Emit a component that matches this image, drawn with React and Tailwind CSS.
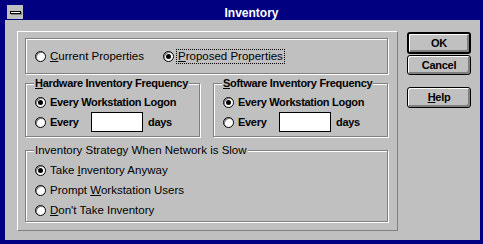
import React from 'react';

// Windows 3.1 style "Inventory" dialog

const boldText = 'text-[11px] font-bold tracking-[-0.3px] leading-[13px]';
const lightText = 'text-[11.5px] leading-[13px]';

const Radio = ({ checked, children, text = boldText }) => (
  <div className="flex items-center h-[20px]">
    <span className="w-[11px] h-[11px] rounded-full border border-black bg-white flex items-center justify-center shadow-[inset_1px_1px_0_#808080]">
      {checked && <span className="w-[5px] h-[5px] rounded-full bg-black" />}
    </span>
    <span className={`ml-[4px] ${text}`}>{children}</span>
  </div>
);

// Etched group box with its title lying on the top edge
const Group = ({ title, titleClass = boldText, className = '', children }) => (
  <div
    className={`relative border border-[#808080] shadow-[1px_1px_0_#fff,inset_1px_1px_0_#fff] ${className}`}
  >
    {title && (
      <span className={`absolute -top-[7px] left-[8px] px-[1px] bg-[#c0c0c0] ${titleClass}`}>
        {title}
      </span>
    )}
    {children}
  </div>
);

const Button = ({ children, isDefault, className = '' }) => (
  <button
    className={`w-[64px] flex items-center justify-center rounded-[3px] bg-[#c0c0c0] border-black ${
      isDefault ? 'border-2' : 'border'
    } shadow-[inset_1px_1px_0_#fff,inset_-2px_-2px_0_#808080] ${boldText} text-black ${className}`}
  >
    {children}
  </button>
);

const FrequencyGroup = ({ title }) => (
  <Group title={title} className="h-[54px] pl-[9px] pt-[8px]">
    <Radio checked>Every Workstation Logon</Radio>
    <div className="flex items-center h-[20px]">
      <Radio>
        <span className="inline-block w-[41px]">Every</span>
      </Radio>
      <div className="w-[52px] h-[20px] bg-white border border-black" />
      <span className={`ml-[5px] ${boldText}`}>days</span>
    </div>
  </Group>
);

export default function App() {
  return (
    <div className="w-[483px] h-[244px] bg-[#000080] pt-[5px] pl-[5px] pr-[3px] pb-[4px] flex flex-col font-['Liberation_Sans',Arial,sans-serif] text-black">
      {/* Title bar */}
      <div className="h-[15px] flex items-stretch">
        <div className="ml-[2px] w-[16px] h-[14px] bg-[#c0c0c0] flex items-center justify-center">
          <span className="w-[11px] h-[3px] bg-white border border-black shadow-[1px_1px_0_#808080]" />
        </div>
        <div className="flex-1 flex items-center justify-center text-white text-[12px] font-bold leading-none">
          Inventory
        </div>
      </div>

      {/* Client area */}
      <div className="flex-1 bg-[#c0c0c0] flex items-start pl-[12px]">
        <div className="mt-[11px] w-[381px] h-[200px] border border-t-white border-l-white border-b-[#808080] border-r-[#808080] pt-[6px] pl-[7px]">
          <div className="w-[363px]">
            <Group className="h-[36px] pl-[9px] flex items-center">
              <div className="w-[128px]">
                <Radio text={lightText}>
                  <span className="underline">C</span>urrent Properties
                </Radio>
              </div>
              <div className="flex items-center h-[20px]">
                <span className="w-[11px] h-[11px] rounded-full border border-black bg-white flex items-center justify-center shadow-[inset_1px_1px_0_#808080]">
                  <span className="w-[5px] h-[5px] rounded-full bg-black" />
                </span>
                <span className={`ml-[2px] px-[1px] border border-dotted border-black ${lightText}`}>
                  <span className="underline">P</span>roposed Properties
                </span>
              </div>
            </Group>

            <div className="mt-[9px] grid grid-cols-2 gap-[13px]">
              <FrequencyGroup
                title={
                  <>
                    <span className="underline">H</span>ardware Inventory Frequency
                  </>
                }
              />
              <FrequencyGroup
                title={
                  <>
                    <span className="underline">S</span>oftware Inventory Frequency
                  </>
                }
              />
            </div>

            <Group
              title="Inventory Strategy When Network is Slow"
              titleClass={lightText}
              className="mt-[13px] h-[72px] pl-[9px] pt-[9px]"
            >
              <Radio checked text={lightText}>
                Take <span className="underline">I</span>nventory Anyway
              </Radio>
              <Radio text={lightText}>
                Prompt <span className="underline">W</span>orkstation Users
              </Radio>
              <Radio text={lightText}>
                <span className="underline">D</span>on't Take Inventory
              </Radio>
            </Group>
          </div>
        </div>

        {/* Buttons */}
        <div className="ml-[9px] mt-[12px] flex flex-col">
          <Button isDefault className="h-[22px]">OK</Button>
          <Button className="mt-[1px] h-[20px]">Cancel</Button>
          <Button className="mt-[12px] h-[21px]">
            <span className="underline">H</span>elp
          </Button>
        </div>
      </div>
    </div>
  );
}
